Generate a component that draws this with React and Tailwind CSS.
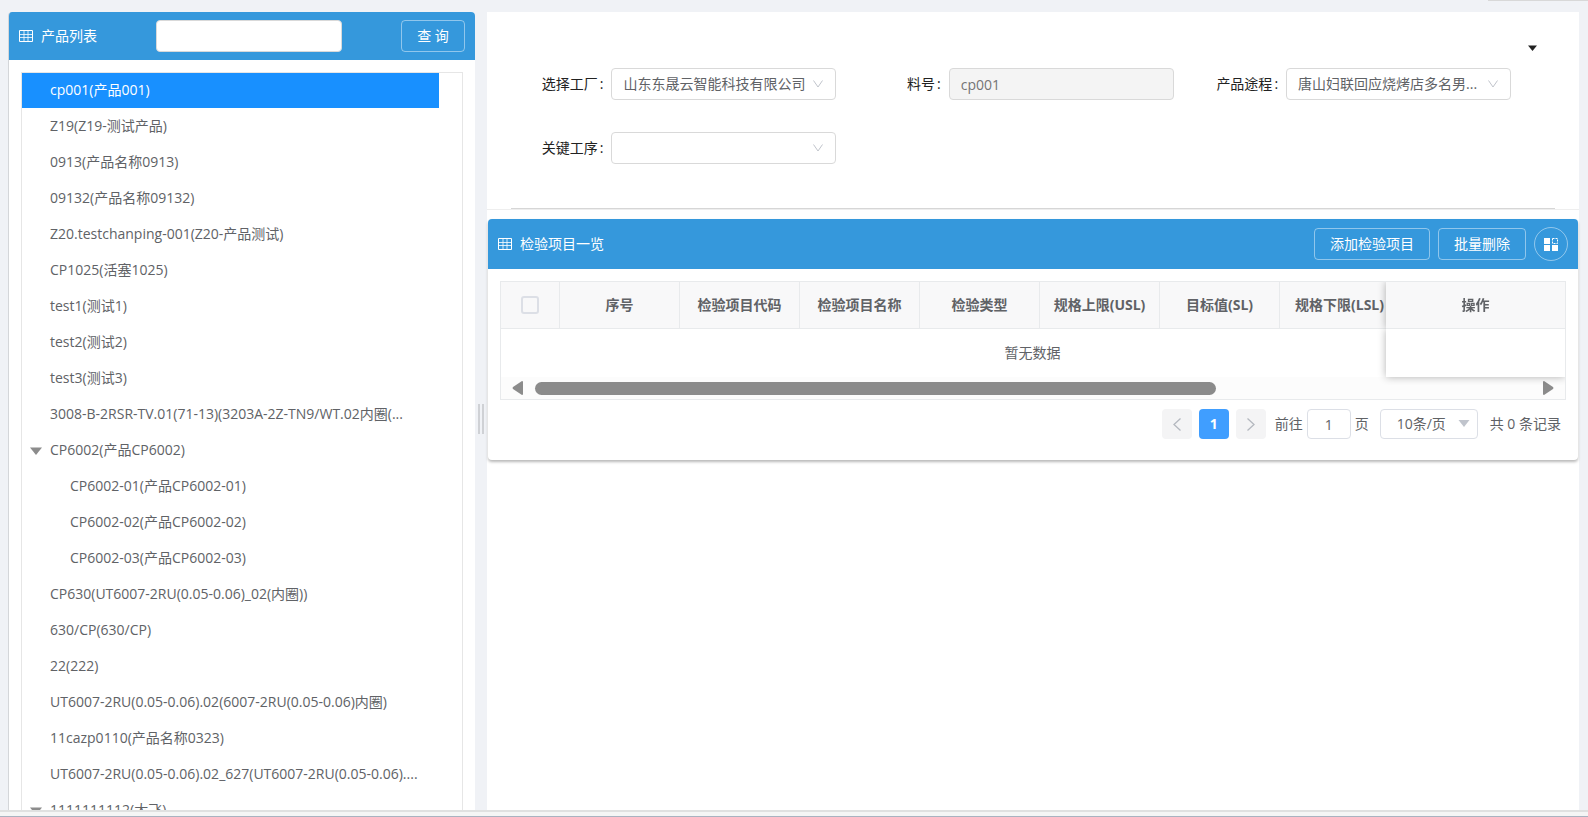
import React, { useState } from 'react';

const products = [
  { name: 'cp001(产品001)' },
  { name: 'Z19(Z19-测试产品)' },
  { name: '0913(产品名称0913)' },
  { name: '09132(产品名称09132)' },
  { name: 'Z20.testchanping-001(Z20-产品测试)' },
  { name: 'CP1025(活塞1025)' },
  { name: 'test1(测试1)' },
  { name: 'test2(测试2)' },
  { name: 'test3(测试3)' },
  { name: '3008-B-2RSR-TV.01(71-13)(3203A-2Z-TN9/WT.02内圈(...' },
  { name: 'CP6002(产品CP6002)', open: true },
  { name: 'CP6002-01(产品CP6002-01)', child: true },
  { name: 'CP6002-02(产品CP6002-02)', child: true },
  { name: 'CP6002-03(产品CP6002-03)', child: true },
  { name: 'CP630(UT6007-2RU(0.05-0.06)_02(内圈))' },
  { name: '630/CP(630/CP)' },
  { name: '22(222)' },
  { name: 'UT6007-2RU(0.05-0.06).02(6007-2RU(0.05-0.06)内圈)' },
  { name: '11cazp0110(产品名称0323)' },
  { name: 'UT6007-2RU(0.05-0.06).02_627(UT6007-2RU(0.05-0.06)....' },
  { name: '1111111112(大飞)', open: true },
];

const columns = ['序号', '检验项目代码', '检验项目名称', '检验类型', '规格上限(USL)', '目标值(SL)', '规格下限(LSL)'];

const TableIcon = () => (
  <svg width="14" height="12" viewBox="0 0 14 12" fill="none" stroke="currentColor" aria-hidden="true">
    <path d="M.5 .5h13v11H.5z" />
    <path d="M1 4.500h12M1 7.500h12M5 1v10M9 1v10" opacity=".8" />
  </svg>
);

const Chevron = () => (
  <svg
    className="pointer-events-none absolute top-1/2 right-[13px] -translate-y-1/2 text-[#c0c4cc]"
    width="10"
    height="8"
    viewBox="0 0 10 8"
    fill="none"
    stroke="currentColor"
    aria-hidden="true"
  >
    <path d="M.5 .5L5 7L9.5 .5" />
  </svg>
);

const Field = ({ id, label, children }) => (
  <div className="flex items-center">
    <label htmlFor={id} className="flex w-1/3 justify-end gap-0.5 pr-2 whitespace-nowrap text-[#222]">
      {label}
      <span>:</span>
    </label>
    <div className="relative w-2/3">{children}</div>
  </div>
);

const Select = ({ id, value }) => (
  <>
    <select
      id={id}
      className="block h-8 w-full appearance-none rounded border border-[#d9d9d9] bg-white pr-6 pl-[11px]"
    >
      <option>{value}</option>
    </select>
    <Chevron />
  </>
);

const ProductPanel = () => {
  const [selected, setSelected] = useState(0);

  return (
    <aside className="flex w-[467px] shrink-0 flex-col overflow-hidden rounded-t border-l border-[#d4d6d9] bg-white">
      <div className="flex h-12 shrink-0 items-center bg-[#3598dc] pr-[10px] pl-[10px] text-white">
        <TableIcon />
        <label htmlFor="keyword" className="w-[123px] pl-2">产品列表</label>
        <input id="keyword" className="h-8 w-[186px] rounded border border-[#d9d9d9] bg-white px-3 text-[#606266]" />
        <button className="ml-auto h-8 w-16 rounded border border-white/45">查 询</button>
      </div>
      <ul className="mx-3 mt-3 min-h-0 grow overflow-hidden border border-b-0 border-[#e6e6e6] pr-[23px]">
        {products.map((item, index) => (
          <li key={item.name} className="pb-px">
            <button
              className={`flex h-[35px] w-full items-center pb-0.5 whitespace-nowrap ${item.child ? 'pl-12' : 'pl-2'} ${
                selected === index ? 'bg-[#1890ff] text-white' : ''
              }`}
              onClick={() => setSelected(index)}
            >
              {!item.child && (
                <span className="w-5 shrink-0 pt-0.5">
                  {item.open && (
                    <svg width="12" height="8" viewBox="0 0 12 8" className="text-[#8c8c8c]" aria-hidden="true">
                      <path d="M0 .5h12L6 8z" fill="currentColor" />
                    </svg>
                  )}
                </span>
              )}
              {item.name}
            </button>
          </li>
        ))}
      </ul>
    </aside>
  );
};

const FilterCard = () => (
  <section className="relative border-b border-[#eeeeee] bg-white pt-14 pr-17 pl-3">
    <button className="absolute top-[31px] right-10 p-0.5" aria-label="收起">
      <svg width="9" height="6" viewBox="0 0 9 6" aria-hidden="true">
        <path d="M0 .5h9L4.500 6z" fill="#222" />
      </svg>
    </button>
    <form className="grid grid-cols-3 gap-y-8">
      <Field id="factory" label="选择工厂">
        <Select id="factory" value="山东东晟云智能科技有限公司" />
      </Field>
      <Field id="partNo" label="料号">
        <input
          id="partNo"
          readOnly
          value="cp001"
          className="block h-8 w-full rounded border border-[#d9d9d9] bg-[#f4f4f4] px-[11px] text-[#757575]"
        />
      </Field>
      <Field id="route" label="产品途程">
        <Select id="route" value="唐山妇联回应烧烤店多名男..." />
      </Field>
      <Field id="process" label="关键工序">
        <Select id="process" value="" />
      </Field>
    </form>
    <hr className="mt-11 -mr-11 ml-3 border-[#d6d6d6]" />
  </section>
);

const InspectionTable = () => (
  <div className="mx-3 mt-3 border border-[#e8eaec]">
    <div className="relative z-10 -mb-2 overflow-hidden pb-2">
      <table className="w-full min-w-[1078px] table-fixed border-separate border-spacing-0">
        <thead>
          <tr className="h-[47px]">
            <th className="w-[59px] border-r border-b border-[#e8eaec] bg-[#f8f8f9] p-0">
              <input
                type="checkbox"
                aria-label="全选"
                className="mx-auto block size-[18px] appearance-none rounded-[3px] border-2 border-[#dcdfe6] bg-[#f8f8f9]"
              />
            </th>
            {columns.map((col) => (
              <th
                key={col}
                className="w-[120px] border-r border-b border-[#e8eaec] bg-[#f8f8f9] p-0 font-bold whitespace-nowrap"
              >
                {col}
              </th>
            ))}
            <th className="sticky right-0 border-b border-[#e8eaec] bg-[#f8f8f9] p-0 font-bold shadow-[0_0_8px_rgba(0,0,0,0.3)] [clip-path:inset(0_0_0_-10px)]">
              操作
            </th>
          </tr>
        </thead>
        <tbody>
          <tr className="h-12">
            <td colSpan={8} className="p-0 pl-[164px] text-center">暂无数据</td>
            <td className="sticky right-0 bg-white p-0 shadow-[0_0_8px_rgba(0,0,0,0.3)] [clip-path:inset(0_0_-10px_-10px)]" />
          </tr>
        </tbody>
      </table>
    </div>
    <div className="flex h-[22px] items-center gap-3 bg-[#fcfcfc] px-[11px] text-[#8b8b8b]">
      <svg width="11" height="14" viewBox="0 0 11 14" aria-hidden="true">
        <path d="M11 1v12q0 1-1 1L1 8Q0 7 1 6L10 0q1 0 1 1z" fill="currentColor" />
      </svg>
      <div className="grow">
        <div className="h-[13px] w-[68.4%] rounded-full bg-[#8b8b8b]" />
      </div>
      <svg width="11" height="14" viewBox="0 0 11 14" aria-hidden="true">
        <path d="M0 1v12q0 1 1 1l9-6q1-1 0-2L1 0Q0 0 0 1z" fill="currentColor" />
      </svg>
    </div>
  </div>
);

const Pager = () => (
  <div className="flex h-[30px] items-center justify-end">
    <button className="flex size-[30px] items-center justify-center rounded bg-[#f4f4f5] text-[#b4b8bf]" aria-label="上一页">
      <svg width="8" height="13" viewBox="0 0 8 13" fill="none" stroke="currentColor" strokeWidth="1.300">
        <path d="M7.500 .5L1 6.500l6.500 6" />
      </svg>
    </button>
    <button className="mx-[7px] size-[30px] rounded bg-[#409eff] font-bold text-white">1</button>
    <button className="flex size-[30px] items-center justify-center rounded bg-[#f4f4f5] text-[#b4b8bf]" aria-label="下一页">
      <svg width="8" height="13" viewBox="0 0 8 13" fill="none" stroke="currentColor" strokeWidth="1.300">
        <path d="M.5 .5L7 6.500l-6.500 6" />
      </svg>
    </button>
    <label className="ml-[9px] flex items-center gap-1">
      前往
      <input defaultValue="1" className="h-[30px] w-11 rounded border border-[#dcdfe6] bg-white text-center" />
      页
    </label>
    <div className="relative mr-3 ml-[11px]">
      <select
        aria-label="每页条数"
        className="block h-[30px] w-[98px] appearance-none rounded border border-[#dcdfe6] bg-white pl-4"
      >
        <option>10条/页</option>
      </select>
      <svg className="pointer-events-none absolute top-[11px] right-2" width="12" height="7" viewBox="0 0 12 7" aria-hidden="true">
        <path d="M.5 0h11L6 7z" fill="#c0c4cc" />
      </svg>
    </div>
    <span>共 0 条记录</span>
  </div>
);

const InspectionCard = () => (
  <section className="mx-px mt-[9px] rounded bg-white pb-[21px] shadow-[0_2px_3px_rgba(0,0,0,0.28)]">
    <div className="flex h-[50px] items-center rounded-t bg-[#3598dc] px-[10px] text-white">
      <TableIcon />
      <h2 className="grow pl-2">检验项目一览</h2>
      <button className="h-8 rounded border border-white/45 px-[15px]">添加检验项目</button>
      <button className="mx-2 h-8 rounded border border-white/45 px-[15px]">批量删除</button>
      <button className="flex size-[34px] items-center justify-center rounded-full border border-white/45" aria-label="列设置">
        <svg width="14" height="13" viewBox="0 0 14 13" aria-hidden="true">
          <path d="M0 0h6v6H0zM0 7h6v6H0zM8 7h6v6H8z" fill="currentColor" />
          <path d="M8.500 .5h5v5h-5z" fill="none" stroke="currentColor" strokeDasharray="2 1" />
        </svg>
      </button>
    </div>
    <InspectionTable />
    <div className="mt-[9px] pr-[17px]">
      <Pager />
    </div>
  </section>
);

const App = () => (
  <div className="flex h-screen flex-col bg-[#f0f2f6] font-['Open_Sans','Noto_Sans_CJK_SC',sans-serif] text-sm text-[#606266]">
    <div className="ml-auto h-px w-[100px] shrink-0 bg-[#d8d8d8]" />
    <div className="flex min-h-0 grow pt-[11px] pr-[9px] pl-2">
      <ProductPanel />
      <div className="flex w-3 shrink-0 items-center justify-center gap-0.5 pt-4" role="separator">
        <span className="h-[30px] w-0.5 bg-[#cfd1d5]" />
        <span className="h-[30px] w-0.5 bg-[#cfd1d5]" />
      </div>
      <main className="min-w-0 grow bg-white">
        <FilterCard />
        <InspectionCard />
      </main>
    </div>
    <div className="h-[7px] shrink-0 border-t-2 border-b border-t-[#e0e0e0] border-b-[#a9b2c0] bg-[#f5f5f5]" />
  </div>
);

export default App;
